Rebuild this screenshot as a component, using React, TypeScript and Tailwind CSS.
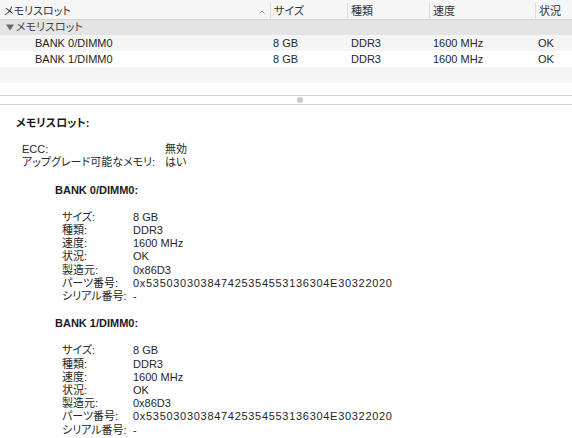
const font = "[font-family:'Liberation_Sans','Noto_Sans_CJK_JP',sans-serif] [font-feature-settings:'palt']";

const banks = [
  { name: "BANK 0/DIMM0" },
  { name: "BANK 1/DIMM0" },
];

const details = [
  ["サイズ:", "8 GB"],
  ["種類:", "DDR3"],
  ["速度:", "1600 MHz"],
  ["状況:", "OK"],
  ["製造元:", "0x86D3"],
  ["パーツ番号:", "0x535030303847425354553136304E30322020"],
  ["シリアル番号:", "-"],
];

const cols = "grid grid-cols-[270px_77px_82px_106px_1fr]";

const App = () => {
  return (
    <main className={`h-[438px] w-[572px] overflow-hidden bg-white text-[11px] text-[#262626] ${font}`}>
      {/* list */}
      <section className="h-[95px] overflow-hidden">
        <header className={`${cols} h-5 border-b border-[#d6d6d6] bg-[#f6f6f6] text-[#333]`}>
          <div className="flex items-center justify-between pl-[4px] pr-[4px]">
            <span>メモリスロット</span>
            <svg width="8" height="6" viewBox="0 0 8 6" className="mt-[1px]">
              <polyline points="1.5,4.5 4,2 6.5,4.5" fill="none" stroke="#9a9a9a" strokeWidth="1" />
            </svg>
          </div>
          {["サイズ", "種類", "速度", "状況"].map((label) => (
            <div key={label} className="flex items-center py-[3px]">
              <div className="h-full w-px bg-[#dcdcdc]" />
              <span className="pl-[3px]">{label}</span>
            </div>
          ))}
        </header>

        <div className="flex h-[15px] items-center bg-[#e4e4e4] pl-[6px] text-[#444]">
          <svg width="8" height="7" viewBox="0 0 8 7">
            <polygon points="0,0.5 8,0.5 4,6.5" fill="#6b6b6b" />
          </svg>
          <span className="ml-[2px]">メモリスロット</span>
        </div>

        {banks.map((bank, i) => (
          <div
            key={bank.name}
            className={`${cols} h-4 items-center ${i % 2 === 0 ? "bg-[#f5f5f5]" : "bg-white"}`}
          >
            <span className="pl-[35px]">{bank.name}</span>
            <span className="pl-[3px]">8 GB</span>
            <span className="pl-[4px]">DDR3</span>
            <span className="pl-[4px]">1600 MHz</span>
            <span className="pl-[3px]">OK</span>
          </div>
        ))}
        <div className="h-4 bg-[#f5f5f5]" />
        <div className="h-4 bg-white" />
      </section>

      {/* splitter */}
      <div className="flex h-[10px] items-center justify-center border-y border-[#d4d4d4] bg-white">
        <div className="ml-[28px] h-[6px] w-[6px] rounded-full bg-[#c9c9c9]" />
      </div>

      {/* detail */}
      <section className="pl-4 pt-[12px] leading-[13.2px]">
        <h1 className="font-bold text-[#1a1a1a]">メモリスロット:</h1>

        <div className="mt-[13px] ml-[6px] grid grid-cols-[143px_1fr]">
          <span>ECC:</span>
          <span>無効</span>
          <span>アップグレード可能なメモリ:</span>
          <span>はい</span>
        </div>

        {banks.map((bank) => (
          <div key={bank.name} className="ml-[39px] mt-[14px]">
            <h2 className="font-bold text-[#1a1a1a]">{bank.name}:</h2>
            <div className="mt-[14px] ml-[7px] grid grid-cols-[71px_1fr]">
              {details.map(([label, value]) => (
                <div key={label} className="contents">
                  <span>{label}</span>
                  <span className={value.length > 20 ? "tracking-[0.7px]" : ""}>{value}</span>
                </div>
              ))}
            </div>
          </div>
        ))}
      </section>
    </main>
  );
};

export default App;
